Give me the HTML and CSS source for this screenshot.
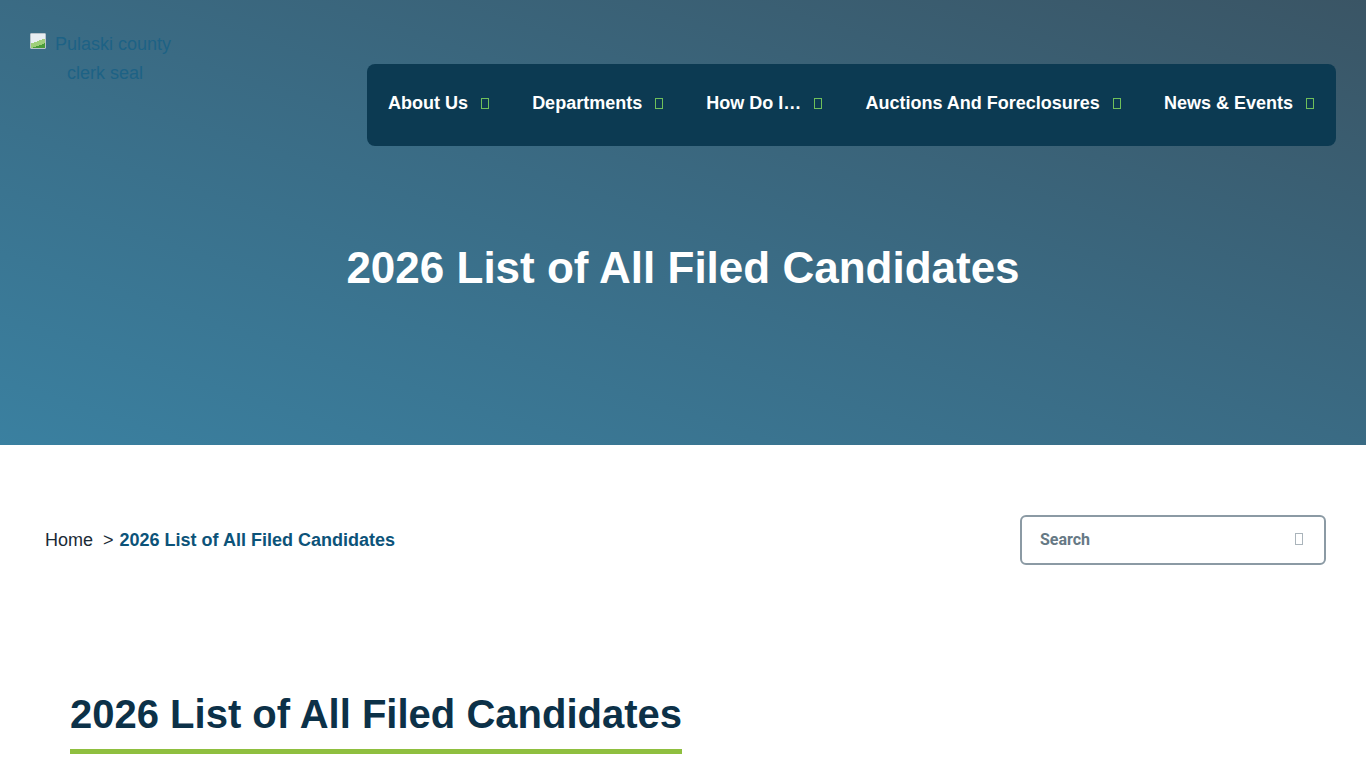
FILE: index.html
```html
<!DOCTYPE html>
<html>
<head>
<meta charset="utf-8">
<link rel="stylesheet" href="styles.css">
</head>
<body>
<header class="hero">
  <div class="topbar">
    <a class="logo" href="#"><span class="broken"></span>Pulaski county clerk seal</a>
    <nav class="nav">
      <a class="nav-item">About Us <span class="tofu"></span></a>
      <a class="nav-item">Departments <span class="tofu"></span></a>
      <a class="nav-item">How Do I… <span class="tofu"></span></a>
      <a class="nav-item">Auctions And Foreclosures <span class="tofu"></span></a>
      <a class="nav-item">News &amp; Events <span class="tofu"></span></a>
    </nav>
  </div>
  <h1 class="hero-title">2026 List of All Filed Candidates</h1>
</header>
<section class="crumbbar">
  <div class="crumbs"><span class="home">Home</span><span class="sep">&gt;</span><span class="current">2026 List of All Filed Candidates</span></div>
  <div class="search"><span class="ph">Search</span><span class="tofu grey"></span></div>
</section>
<main class="content">
  <h2 class="page-title">2026 List of All Filed Candidates</h2>
</main>
</body>
</html>
```
FILE: styles.css
```css
* { box-sizing: border-box; }
html, body { margin: 0; padding: 0; }
body { font-family: "Liberation Sans", Arial, sans-serif; background: #fff; overflow: hidden; }
.hero {
  height: 445px;
  background: linear-gradient(to bottom left, #3a5565 0%, #3a6b84 50%, #3a80a0 100%);
  display: flex;
  flex-direction: column;
}
.topbar {
  display: flex;
  justify-content: space-between;
  align-items: flex-start;
  padding: 30px 30px 0 30px;
}
.logo {
  width: 150px;
  text-align: center;
  text-indent: -9px;
  color: #1d6285;
  font-size: 18px;
  line-height: 29px;
  text-decoration: none;
}
.broken {
  display: inline-block;
  width: 16px; height: 16px;
  margin-right: 9px;
  vertical-align: 1px;
  background: linear-gradient(160deg, #e8eef3 0 50%, #9fcf7a 50% 75%, #4a9c3a 75%);
  border: 1px solid #b9c4cc;
  border-radius: 1px;
}
.nav {
  margin-top: 34px;
  height: 82px;
  width: 969px;
  background: #0c3a52;
  border-radius: 8px;
  display: flex;
  align-items: center;
  justify-content: space-between;
  padding: 0 22px 4px 21px;
}
.nav-item {
  color: #fff;
  font-weight: bold;
  font-size: 18px;
  white-space: nowrap;
  display: flex;
  align-items: center;
}
.tofu {
  display: inline-block;
  width: 8px; height: 11px;
  border: 1px solid #6fbf5a;
  margin-left: 13px;
}
.tofu.grey { border-color: #aab4bb; margin-left: 0; width: 8px; height: 12px; }
.hero-title {
  margin: 97px 0 0 0;
  text-align: center;
  color: #fff;
  font-size: 44px;
  font-weight: bold;
  line-height: 50px;
}
.crumbbar {
  display: flex;
  justify-content: space-between;
  align-items: center;
  padding: 70px 40px 0 45px;
}
.crumbs { font-size: 18px; color: #1b2a36; }
.crumbs .sep { margin: 0 6px 0 10px; }
.crumbs .current { color: #0c5379; font-weight: bold; }
.search {
  width: 306px; height: 50px;
  border: 2px solid #8b9aa4;
  border-radius: 6px;
  display: flex;
  align-items: center;
  justify-content: space-between;
  padding: 0 21px 2px 18px;
}
.ph { font-family: Roboto, "Liberation Sans", sans-serif; font-weight: bold; font-size: 16px; color: #667985; }
.content { padding: 126px 0 0 70px; }
.page-title {
  display: inline-block;
  margin: 0;
  font-size: 40px;
  line-height: 46px;
  color: #0c3148;
  font-weight: bold;
  padding-bottom: 12px;
  border-bottom: 5px solid #8fbf3f;
}
```
